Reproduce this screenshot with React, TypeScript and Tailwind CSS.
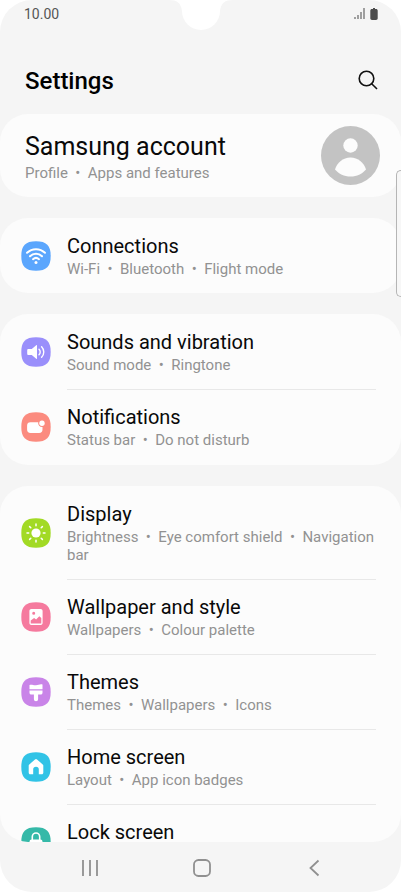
import React from "react";

type Item = {
  title: string;
  details: string[];
  color: string;
  icon: React.ReactNode;
};

const WifiIcon = (
  <>
    <path d="M6 11.800a13 13 0 0 1 18 0" />
    <path d="M9 15.200a8.600 8.600 0 0 1 12 0" />
    <path d="M12 18.200a4.600 4.600 0 0 1 6 0" />
    <circle cx="15" cy="21.400" r="1.500" fill="white" stroke="none" />
  </>
);

const SoundIcon = (
  <>
    <path d="M7.500 12h3.300l4.400-3.800c.4-.3.8-.1.8.4v12.800c0 .5-.4.7-.8.4L10.800 18H7.500c-.8 0-1.300-.5-1.300-1.300v-3.400c0-.8.5-1.300 1.300-1.300z" fill="white" stroke="none" />
    <path d="M18 12.200c1.600 1.600 1.600 4 0 5.600M20.600 9.800c2.900 2.900 2.900 7.500 0 10.400" strokeWidth="1.400" />
  </>
);

const NotificationIcon = (
  <>
    <path d="M9.500 10.200h7.700a4 4 0 0 0 4.300 4.800v2.500a3.400 3.400 0 0 1-3.400 3.400H9.500a3.400 3.400 0 0 1-3.400-3.400v-3.900a3.400 3.400 0 0 1 3.400-3.400z" fill="white" stroke="none" />
    <circle cx="21" cy="11.300" r="2.700" fill="white" stroke="none" />
  </>
);

const SunIcon = (
  <>
    <circle cx="15" cy="15" r="4.600" fill="white" stroke="none" />
    <path strokeWidth="1.500" d="M15 6v1.700M15 22.300V24M6 15h1.700M22.300 15H24M8.600 8.600l1.200 1.200M20.200 20.200l1.200 1.200M8.600 21.400l1.200-1.200M20.200 9.800l1.200-1.200" />
  </>
);

const PictureIcon = (
  <path
    fillRule="evenodd"
    fill="white"
    stroke="none"
    d="M10.400 7h9.200c1.200 0 2 .8 2 2v12c0 1.200-.8 2-2 2h-9.200c-1.200 0-2-.8-2-2V9c0-1.200.8-2 2-2zM12.700 9.700a1.500 1.500 0 1 0 0 3 1.500 1.500 0 0 0 0-3zM9.700 21.400h10.600v-5.400l-2-1.700-3.200 3.200-2-1.500-3.400 2.600z"
  />
);

const BrushIcon = (
  <>
    <path d="M8.500 8c2.200-1 4 .7 6.500.3 2.400-.3 4.400-1.600 6.500-.8v4.700h-13z" fill="white" stroke="none" />
    <path d="M8.500 13.400h13v2.400c0 1.100-.7 1.800-1.800 1.800h-2.600v4.600a2.100 2.100 0 0 1-4.200 0v-4.600h-2.600c-1.100 0-1.800-.7-1.800-1.800z" fill="white" stroke="none" />
  </>
);

const HomeIcon = (
  <path
    fill="white"
    stroke="none"
    d="M14 7.500a1.500 1.500 0 0 1 2 0l5.700 4.900c.4.300.6.700.6 1.200v7.100c0 .9-.6 1.500-1.500 1.500h-3v-4.700a2.800 2.800 0 0 0-5.600 0v4.700h-3c-.9 0-1.500-.6-1.500-1.500v-7.100c0-.5.2-.9.6-1.200z"
  />
);

const LockIcon = (
  <>
    <path d="M11.300 13V9.700a3.700 3.700 0 0 1 7.400 0V13" strokeWidth="1.600" />
    <rect x="8.500" y="12.500" width="13" height="10.500" rx="2" fill="white" stroke="none" />
  </>
);

const groups: Item[][] = [
  [{ title: "Connections", details: ["Wi-Fi", "Bluetooth", "Flight mode"], color: "#5ba6fd", icon: WifiIcon }],
  [
    { title: "Sounds and vibration", details: ["Sound mode", "Ringtone"], color: "#9a8ffb", icon: SoundIcon },
    { title: "Notifications", details: ["Status bar", "Do not disturb"], color: "#fb8b7f", icon: NotificationIcon },
  ],
  [
    { title: "Display", details: ["Brightness", "Eye comfort shield", "Navigation bar"], color: "#a2da25", icon: SunIcon },
    { title: "Wallpaper and style", details: ["Wallpapers", "Colour palette"], color: "#f57a9e", icon: PictureIcon },
    { title: "Themes", details: ["Themes", "Wallpapers", "Icons"], color: "#c984e8", icon: BrushIcon },
    { title: "Home screen", details: ["Layout", "App icon badges"], color: "#31c3e6", icon: HomeIcon },
    { title: "Lock screen", details: [], color: "#35b9a8", icon: LockIcon },
  ],
];

function Details({ parts }: { parts: string[] }) {
  return (
    <span className="block min-h-[18px] text-[15px] leading-[18px] text-[#929292]">
      {parts.join("\u00a0 •\u00a0 ")}
    </span>
  );
}

function Row({ item, first }: { item: Item; first: boolean }) {
  return (
    <li>
      {!first && <div className="-mb-px mr-[25px] ml-[67px] h-px bg-[#e8e8e8]" />}
      <button type="button" className="flex w-full items-center gap-4 py-[15px] pr-6 pl-[21px] text-left">
        <svg viewBox="0 0 30 30" className="size-[30px] shrink-0" fill="none" stroke="white" strokeWidth="2" strokeLinecap="round" aria-hidden="true">
          <path stroke="none" fill={item.color} d="M15 .3C25.500.3 29.700 4.500 29.700 15S25.500 29.700 15 29.700.3 25.500.3 15 4.500.3 15 .3z" />
          {item.icon}
        </svg>
        <span className="min-w-0">
          <span className="block text-xl leading-[27px] text-[#090909]">{item.title}</span>
          <Details parts={item.details} />
        </span>
      </button>
    </li>
  );
}

export default function App() {
  return (
    <div className="h-screen bg-white font-[Roboto,sans-serif]">
      <div className="relative flex h-full flex-col overflow-hidden rounded-[32px] bg-[#f5f5f5]">
        <svg viewBox="0 0 64 30" className="absolute top-0 left-1/2 h-[30px] w-16 -translate-x-1/2" aria-hidden="true">
          <path fill="white" d="M0 0h64c-8 0-12 3-13 11a19 19 0 0 1-38 0C12 3 8 0 0 0z" />
        </svg>

        <div className="flex h-7 shrink-0 items-center justify-between pr-[23px] pl-6 text-sm text-[#555]">
          <span>10.00</span>
          <svg viewBox="0 0 24 12" className="h-3 w-6" aria-hidden="true">
            <path stroke="#666" strokeWidth="1.200" d="M1 11V9M4 11V7M7 11V4M10 11V0" />
            <path fill="#4c4c4c" d="M18 1h1V0h2v1h1c1 0 1.700.7 1.700 1.700v7.600c0 1-.7 1.700-1.700 1.700h-4c-1 0-1.700-.7-1.700-1.700V2.700c0-1 .7-1.700 1.700-1.700z" />
          </svg>
        </div>

        <header className="flex h-[86px] shrink-0 items-center justify-between pt-5 pr-[23px] pl-[25px]">
          <h1 className="text-2xl font-medium text-black">Settings</h1>
          <button type="button" aria-label="Search" className="mb-0.5">
            <svg viewBox="0 0 20 20" className="size-5" fill="none" stroke="#111" strokeWidth="1.600" aria-hidden="true">
              <circle cx="8.500" cy="8.500" r="7.300" />
              <path d="M13.700 13.700l5.300 5.300" />
            </svg>
          </button>
        </header>

        <main className="flex min-h-0 flex-1 flex-col gap-[21px] overflow-hidden rounded-b-[28px]">
          <button type="button" className="flex h-[83px] w-full shrink-0 items-center justify-between rounded-[28px] bg-[#fcfcfc] pr-[21px] pl-[25px] text-left">
            <span>
              <span className="block text-[25px] leading-[34px] text-[#090909]">Samsung account</span>
              <Details parts={["Profile", "Apps and features"]} />
            </span>
            <svg viewBox="0 0 59 59" className="size-[59px]" aria-hidden="true">
              <circle cx="29.500" cy="29.500" r="29.500" fill="#c3c3c3" />
              <circle cx="29.500" cy="19.500" r="7.200" fill="#fcfcfc" />
              <path fill="#fcfcfc" d="M14 43.500C16 36.500 22 31.500 29.500 31.500S43 36.500 45 43.500C41 48 36 50.500 29.500 50.500S18 48 14 43.500z" />
            </svg>
          </button>
          {groups.map((group) => (
            <ul key={group[0].title} className={group.length > 1 ? "shrink-0 rounded-[28px] bg-[#fcfcfc] pb-px" : "shrink-0 rounded-[28px] bg-[#fcfcfc]"}>
              {group.map((item, i) => (
                <Row key={item.title} item={item} first={i === 0} />
              ))}
            </ul>
          ))}
        </main>

        <nav className="flex h-[50px] shrink-0 items-center justify-between px-20 pt-0.5">
          <button type="button" aria-label="Recent apps">
            <svg viewBox="0 0 20 18" className="h-[18px] w-5" stroke="#909090" strokeWidth="1.800" aria-hidden="true">
              <path d="M3 1v16M10 1v16M17 1v16" />
            </svg>
          </button>
          <button type="button" aria-label="Home">
            <svg viewBox="0 0 18 18" className="size-[18px]" fill="none" stroke="#909090" strokeWidth="1.800" aria-hidden="true">
              <rect x="1" y="1" width="16" height="16" rx="4.500" />
            </svg>
          </button>
          <button type="button" aria-label="Back">
            <svg viewBox="0 0 18 18" className="size-[18px]" fill="none" stroke="#909090" strokeWidth="1.800" aria-hidden="true">
              <path d="M15.500 1.500L7.500 9l8 7.500" />
            </svg>
          </button>
        </nav>

        <div className="absolute top-[170px] right-0 h-[127px] w-[5px] rounded-l-[5px] border border-r-0 border-[#b5b5b5] bg-[#f7f7f7]" />
      </div>
    </div>
  );
}
